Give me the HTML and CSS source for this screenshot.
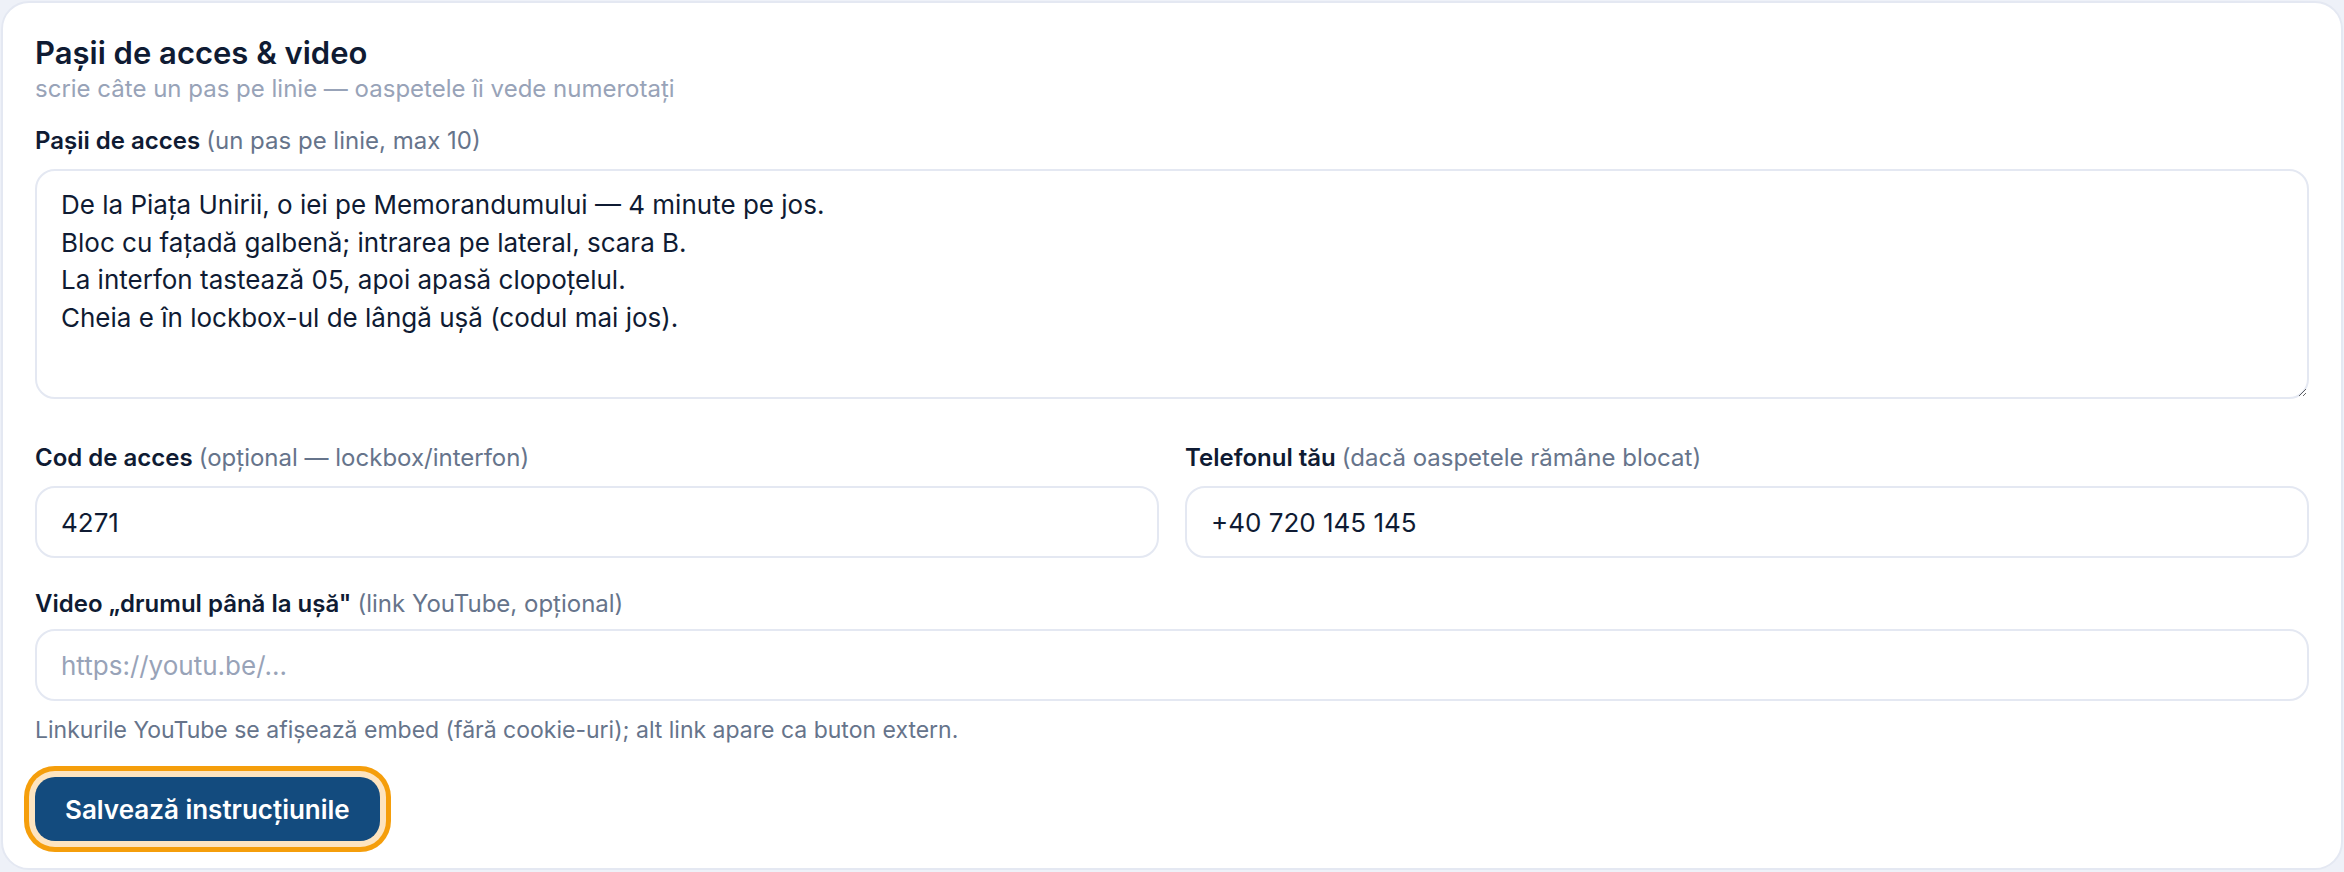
FILE: index.html
```html
<!DOCTYPE html>
<html lang="ro">
<head>
  <meta charset="UTF-8">
  <title>Pașii de acces & video</title>
  <link rel="stylesheet" href="styles.css">
</head>
<body>
  <div class="card">
    <h2 class="titlu">Pașii de acces &amp; video</h2>
    <p class="subtitlu">scrie câte un pas pe linie — oaspetele îi vede numerotați</p>

    <label class="eticheta" for="pasi">Pașii de acces <span class="nota">(un pas pe linie, max 10)</span></label>
    <textarea id="pasi" class="camp zona">De la Piața Unirii, o iei pe Memorandumului — 4 minute pe jos.
Bloc cu fațadă galbenă; intrarea pe lateral, scara B.
La interfon tastează 05, apoi apasă clopoțelul.
Cheia e în lockbox-ul de lângă ușă (codul mai jos).</textarea>

    <div class="rand">
      <div class="coloana">
        <label class="eticheta" for="cod">Cod de acces <span class="nota">(opțional — lockbox/interfon)</span></label>
        <input id="cod" class="camp" type="text" value="4271">
      </div>
      <div class="coloana">
        <label class="eticheta" for="telefon">Telefonul tău <span class="nota">(dacă oaspetele rămâne blocat)</span></label>
        <input id="telefon" class="camp" type="text" value="+40 720 145 145">
      </div>
    </div>

    <div class="video">
      <label class="eticheta" for="video">Video „drumul până la ușă" <span class="nota">(link YouTube, opțional)</span></label>
      <input id="video" class="camp" type="text" placeholder="https://youtu.be/...">
      <p class="ajutor">Linkurile YouTube se afișează embed (fără cookie-uri); alt link apare ca buton extern.</p>
    </div>

    <button class="salveaza">Salvează instrucțiunile</button>
  </div>
</body>
</html>
```

FILE: styles.css
```css
body {
  font-family: Inter, 'Noto Sans', sans-serif;
  background: #eef1f8;
  margin: 0;
  padding: 1px;
  color: #0f1b33;
}

.card {
  background: white;
  border: 2px solid #e4e8f2;
  border-radius: 28px;
  padding: 33px 32px 27px 32px;
}

.titlu {
  font-size: 31px;
  font-weight: 600;
  line-height: 34px;
  margin: 0;
  color: #0f1b33;
}

.subtitlu {
  font-size: 24px;
  line-height: 36px;
  margin: 1px 0 0 0;
  color: #98a3b8;
}

.eticheta {
  display: block;
  font-size: 24px;
  font-weight: 600;
  line-height: 28px;
  margin-bottom: 14px;
  color: #0f1b33;
}

.subtitlu + .eticheta {
  margin-top: 20px;
}

.nota {
  font-weight: 400;
  color: #66748b;
}

.camp {
  display: block;
  box-sizing: border-box;
  width: 100%;
  font-family: inherit;
  font-size: 26px;
  color: #0f1b33;
  background: white;
  border: 2px solid #e4e8f2;
  border-radius: 20px;
  padding: 0 24px;
  height: 72px;
  outline: none;
}

.camp::placeholder {
  color: #98a3b8;
}

.zona {
  height: 230px;
  padding: 15px 24px;
  line-height: 37.5px;
  resize: vertical;
}

.rand {
  display: grid;
  grid-template-columns: 1fr 1fr;
  gap: 26px;
  margin-top: 45px;
}

.video {
  margin-top: 32px;
}

.video .eticheta {
  margin-bottom: 11px;
}

.ajutor {
  font-size: 23px;
  line-height: 28px;
  margin: 15px 0 0 0;
  color: #66748b;
}

.salveaza {
  display: block;
  margin: 33px 0 0 0;
  height: 64px;
  padding: 0 30px;
  font-family: inherit;
  font-size: 26px;
  font-weight: 600;
  color: white;
  background: #134b7e;
  border: none;
  border-radius: 20px;
  box-shadow: 0 0 0 6px #fde4c0, 0 0 0 11px #f59e0b;
  cursor: pointer;
}
```
